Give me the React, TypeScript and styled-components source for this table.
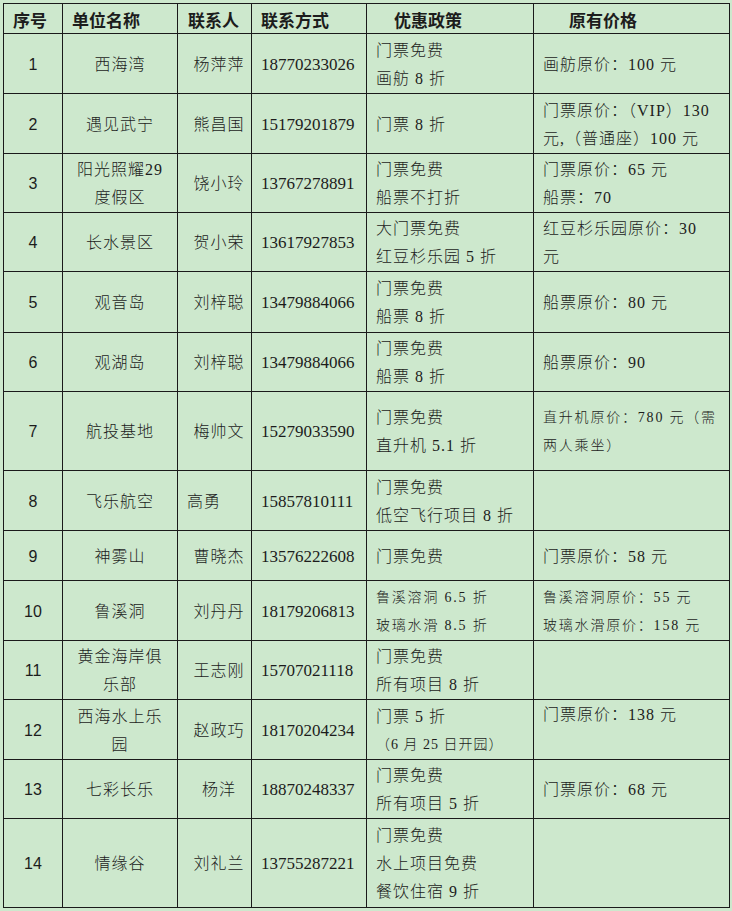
import React from "react";
import styled, { createGlobalStyle } from "styled-components";

const GlobalStyle = createGlobalStyle`
  html, body {
    margin: 0;
    padding: 0;
    background: #cde8cd;
  }
`;

const Page = styled.div`
  padding: 3px 0 0 3px;
  min-height: 911px;
  box-sizing: border-box;
`;

const Table = styled.table`
  width: 726px;
  table-layout: fixed;
  border-collapse: collapse;
  color: #1c1c1c;
`;

const HeadCell = styled.th<{ $indent?: number }>`
  border: 1px solid #1a1a1a;
  height: 24px;
  padding: 2px 0 0 ${(p) => p.$indent ?? 9}px;
  text-align: left;
  vertical-align: middle;
  font-family: "Noto Sans CJK SC", sans-serif;
  font-weight: 700;
  font-size: 17px;
  line-height: 20px;
  white-space: nowrap;
`;

const Cell = styled.td<{
  $kind: "no" | "name" | "contact" | "phone" | "text";
  $align?: "left" | "center";
  $top?: boolean;
  $small?: boolean;
}>`
  border: 1px solid #1a1a1a;
  padding: ${(p) => (p.$top ? "1px" : "2px")} 0 0
    ${(p) => (p.$kind === "no" || p.$kind === "name" ? 0 : 9)}px;
  text-align: ${(p) =>
    p.$align ?? (p.$kind === "no" || p.$kind === "name" || p.$kind === "contact" ? "center" : "left")};
  vertical-align: ${(p) => (p.$top ? "top" : "middle")};
  white-space: nowrap;
  line-height: 28px;
  font-family: ${(p) =>
    p.$kind === "no"
      ? `"Liberation Sans", Arial, sans-serif`
      : `"Liberation Serif", "Noto Sans CJK SC", serif`};
  font-size: ${(p) => (p.$kind === "no" ? 16 : p.$kind === "phone" ? 17 : p.$small ? 14 : 16)}px;
  font-weight: 300;
  letter-spacing: ${(p) => (p.$kind === "no" || p.$kind === "phone" ? 0 : p.$small ? 1.8 : 1)}px;
`;

const Line = styled.div<{ $small?: boolean }>`
  font-size: ${(p) => (p.$small ? "14px" : "inherit")};
`;

type Text = string | { t: string; small: true };

type Row = {
  no: number;
  name: string[];
  contact: string;
  contactLeft?: boolean;
  phone: string;
  policy: Text[];
  policySmall?: boolean;
  price: Text[];
  priceSmall?: boolean;
  priceTop?: boolean;
  h: number;
};

const rows: Row[] = [
  { no: 1, name: ["西海湾"], contact: "杨萍萍", phone: "18770233026", policy: ["门票免费", "画舫 8 折"], price: ["画舫原价：100 元"], h: 60 },
  { no: 2, name: ["遇见武宁"], contact: "熊昌国", phone: "15179201879", policy: ["门票 8 折"], price: ["门票原价：（VIP）130", "元,（普通座）100 元"], h: 60 },
  { no: 3, name: ["阳光照耀29", "度假区"], contact: "饶小玲", phone: "13767278891", policy: ["门票免费", "船票不打折"], price: ["门票原价：65 元", "船票：70"], h: 59 },
  { no: 4, name: ["长水景区"], contact: "贺小荣", phone: "13617927853", policy: ["大门票免费", "红豆杉乐园 5 折"], price: ["红豆杉乐园原价：30", "元"], h: 59 },
  { no: 5, name: ["观音岛"], contact: "刘梓聪", phone: "13479884066", policy: ["门票免费", "船票 8 折"], price: ["船票原价：80 元"], h: 61 },
  { no: 6, name: ["观湖岛"], contact: "刘梓聪", phone: "13479884066", policy: ["门票免费", "船票 8 折"], price: ["船票原价：90"], h: 58 },
  { no: 7, name: ["航投基地"], contact: "梅帅文", phone: "15279033590", policy: ["门票免费", "直升机 5.1 折"], price: ["直升机原价：780 元（需", "两人乘坐）"], priceSmall: true, h: 79 },
  { no: 8, name: ["飞乐航空"], contact: "高勇", contactLeft: true, phone: "15857810111", policy: ["门票免费", "低空飞行项目 8 折"], price: [], h: 60 },
  { no: 9, name: ["神雾山"], contact: "曹晓杰", phone: "13576222608", policy: ["门票免费"], price: ["门票原价：58 元"], h: 50 },
  { no: 10, name: ["鲁溪洞"], contact: "刘丹丹", phone: "18179206813", policy: ["鲁溪溶洞 6.5 折", "玻璃水滑 8.5 折"], policySmall: true, price: ["鲁溪溶洞原价：55 元", "玻璃水滑原价：158 元"], priceSmall: true, h: 60 },
  { no: 11, name: ["黄金海岸俱", "乐部"], contact: "王志刚", phone: "15707021118", policy: ["门票免费", "所有项目 8 折"], price: [], h: 59 },
  { no: 12, name: ["西海水上乐", "园"], contact: "赵政巧", phone: "18170204234", policy: ["门票 5 折", { t: "（6 月 25 日开园）", small: true }], price: ["门票原价：138 元"], priceTop: true, h: 60 },
  { no: 13, name: ["七彩长乐"], contact: "杨洋", phone: "18870248337", policy: ["门票免费", "所有项目 5 折"], price: ["门票原价：68 元"], h: 59 },
  { no: 14, name: ["情缘谷"], contact: "刘礼兰", phone: "13755287221", policy: ["门票免费", "水上项目免费", "餐饮住宿 9 折"], price: [], h: 89 },
];

function Lines({ items }: { items: Text[] }) {
  return (
    <>
      {items.map((l, i) =>
        typeof l === "string" ? (
          <Line key={i}>{l}</Line>
        ) : (
          <Line key={i} $small>
            {l.t}
          </Line>
        )
      )}
    </>
  );
}

export default function App() {
  return (
    <Page>
      <GlobalStyle />
      <Table>
        <colgroup>
          <col style={{ width: 59 }} />
          <col style={{ width: 115 }} />
          <col style={{ width: 74 }} />
          <col style={{ width: 115 }} />
          <col style={{ width: 167 }} />
          <col style={{ width: 196 }} />
        </colgroup>
        <thead>
          <tr style={{ height: 30 }}>
            <HeadCell>序号</HeadCell>
            <HeadCell>单位名称</HeadCell>
            <HeadCell $indent={10}>联系人</HeadCell>
            <HeadCell>联系方式</HeadCell>
            <HeadCell $indent={27}>优惠政策</HeadCell>
            <HeadCell $indent={35}>原有价格</HeadCell>
          </tr>
        </thead>
        <tbody>
          {rows.map((r) => (
            <tr key={r.no} style={{ height: r.h }}>
              <Cell $kind="no">{r.no}</Cell>
              <Cell $kind="name">
                <Lines items={r.name} />
              </Cell>
              <Cell $kind="contact" $align={r.contactLeft ? "left" : undefined}>
                {r.contact}
              </Cell>
              <Cell $kind="phone">{r.phone}</Cell>
              <Cell $kind="text" $small={r.policySmall}>
                <Lines items={r.policy} />
              </Cell>
              <Cell $kind="text" $small={r.priceSmall} $top={r.priceTop}>
                <Lines items={r.price} />
              </Cell>
            </tr>
          ))}
        </tbody>
      </Table>
    </Page>
  );
}
